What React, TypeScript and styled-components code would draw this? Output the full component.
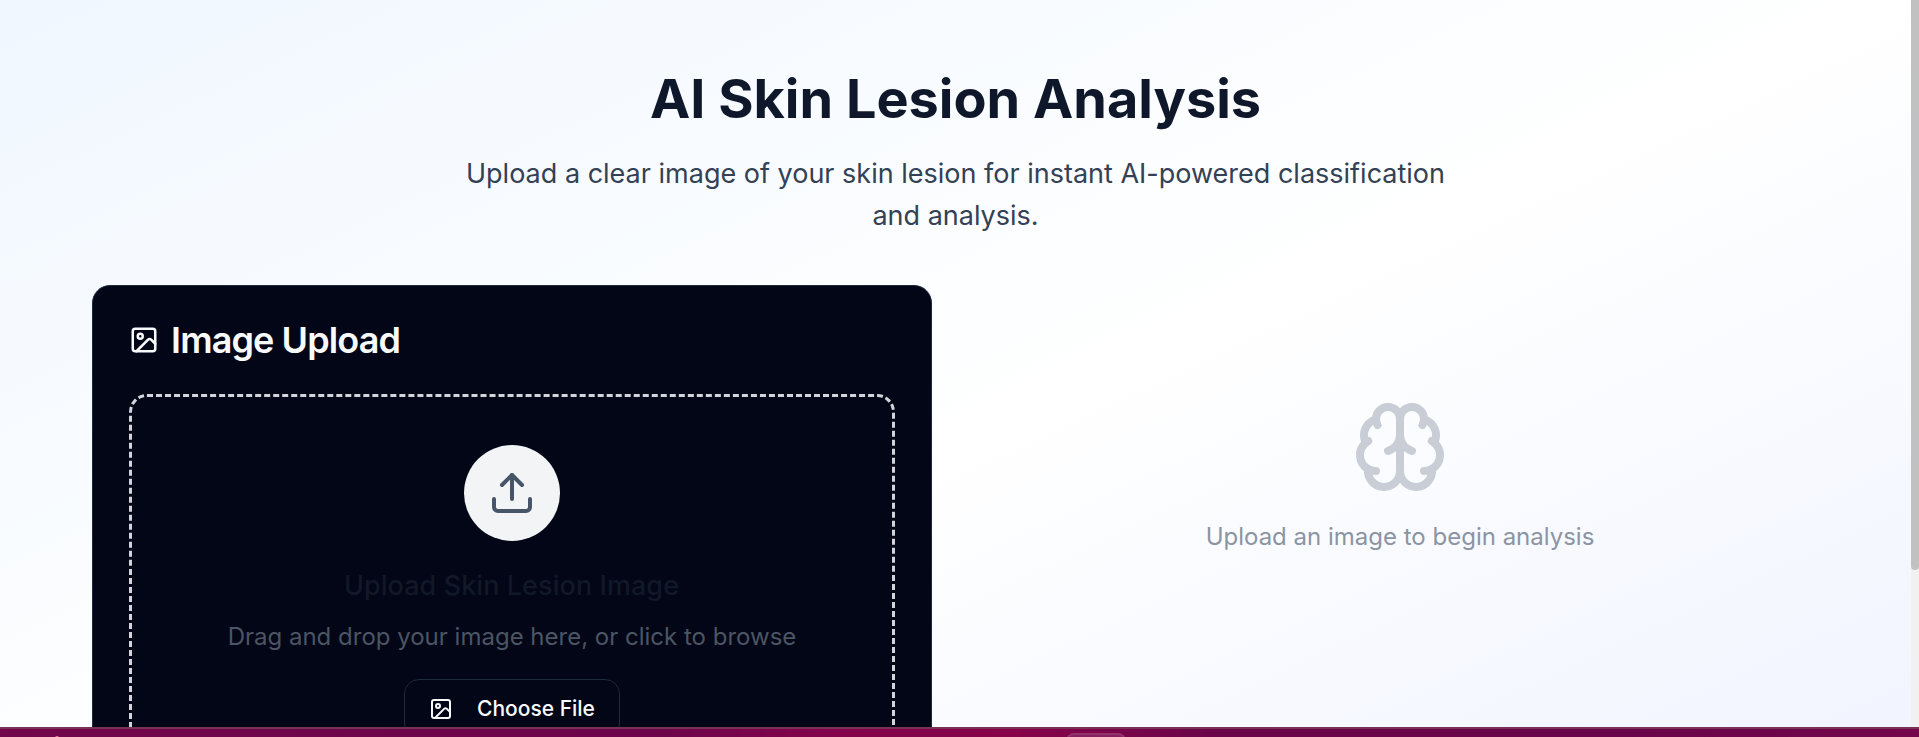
import React from "react";
import styled, { createGlobalStyle } from "styled-components";

const GlobalStyle = createGlobalStyle`
  * { box-sizing: border-box; margin: 0; padding: 0; }
  html, body, #root { height: 100%; overflow: hidden; }
  body { font-family: Inter, "Liberation Sans", sans-serif; color: #0f172a; }
`;

const Shell = styled.div`
  height: 737px;
  display: flex;
  flex-direction: column;
`;
const Viewport = styled.div`
  height: 727px;
  display: flex;
  overflow: hidden;
`;
const Page = styled.main`
  flex: 1;
  height: 1112px;
  padding-top: 72px;
  background: linear-gradient(to bottom right, #f0f7ff 0%, #ffffff 50%, #eef2ff 100%);
  background-size: 100% 900px;
`;
const ScrollTrack = styled.div`
  width: 8px;
  background: #f1f1f1;
`;
const ScrollThumb = styled.div`
  height: 570px;
  background: #c1c1c1;
  border-radius: 0 0 4px 4px;
`;
const Header = styled.header`
  display: flex;
  flex-direction: column;
  align-items: center;
  text-align: center;
`;
const Title = styled.h1`
  font-size: 54px;
  line-height: 54px;
  font-weight: 700;
  color: #0f172a;
`;
const Lead = styled.p`
  width: 1008px;
  margin-top: 27px;
  font-size: 27px;
  line-height: 42px;
  color: #334155;
`;
const Columns = styled.div`
  width: 1728px;
  margin: 48px auto 0;
  display: grid;
  grid-template-columns: 1fr 1fr;
  gap: 48px;
`;
const Card = styled.section`
  height: 700px;
  padding: 36px;
  border: 1px solid #1e293b;
  border-radius: 18px;
  background: #020617;
`;
const CardTitle = styled.h2`
  display: flex;
  align-items: center;
  gap: 12.6px;
  height: 36px;
  font-size: 36px;
  line-height: 36px;
  font-weight: 600;
  letter-spacing: -0.025em;
  color: #f8fafc;
`;
const DropZone = styled.div`
  height: 560px;
  margin-top: 36px;
  padding-top: 48px;
  display: flex;
  flex-direction: column;
  align-items: center;
  border: 3px dashed #d1d5db;
  border-radius: 18px;
`;
const UploadBadge = styled.div`
  width: 96px;
  height: 96px;
  display: flex;
  align-items: center;
  justify-content: center;
  border-radius: 50%;
  background: #f3f4f6;
  color: #475569;
`;
const DropTitle = styled.h3`
  margin-top: 24px;
  font-size: 27px;
  line-height: 42px;
  font-weight: 500;
  letter-spacing: 0.07px;
  color: #111827;
`;
const DropHint = styled.p`
  margin-top: 12px;
  padding-left: 1px;
  font-size: 24px;
  line-height: 36px;
  color: #4b5563;
`;
const FileButton = styled.button`
  width: 216px;
  height: 60px;
  margin-top: 24px;
  display: flex;
  flex-shrink: 0;
  align-items: center;
  padding-left: 24px;
  gap: 24.5px;
  border: 1px solid #1e293b;
  border-radius: 15px;
  background: transparent;
  font: 550 21px/30px Inter, sans-serif;
  color: #f8fafc;
`;
const EmptyState = styled.section`
  display: flex;
  flex-direction: column;
  align-items: center;
  padding-top: 114px;
`;
const EmptyText = styled.p`
  margin-top: 24px;
  padding-left: 1px;
  font-size: 24px;
  line-height: 36px;
  color: #8b94a3;
`;
const BottomBar = styled.footer`
  height: 10px;
  padding: 4px 0 0 1066px;
  border-top: 2px solid #793158;
  background:
    radial-gradient(circle at 57px 9px, #e87898 0 1.5px, transparent 2.5px),
    linear-gradient(90deg, #72064b 0%, #6c054b 34%, #82034b 43%, #87034a 53%, #6b0549 63%, #69054a 85%, #74064b 100%);
  overflow: hidden;
`;
const BarTab = styled.div`
  width: 60px;
  height: 30px;
  border: 2px solid #92316b;
  border-radius: 8px;
  background: #87205e;
`;

const Icon = styled.svg<{ $size: number }>`
  width: ${(p) => p.$size}px;
  height: ${(p) => p.$size}px;
  flex-shrink: 0;
  fill: none;
  stroke: currentColor;
  stroke-width: 2;
  stroke-linecap: round;
  stroke-linejoin: round;
`;

const BrainIcon = styled(Icon)`
  color: #c9ced6;
`;

const ImageIcon = ({ size }: { size: number }) => (
  <Icon $size={size} viewBox="0 0 24 24">
    <rect width="18" height="18" x="3" y="3" rx="2" />
    <circle cx="9" cy="9" r="2" />
    <path d="m21 15-3.086-3.086a2 2 0 0 0-2.828 0L6 21" />
  </Icon>
);

export default function App() {
  return (
    <Shell>
      <GlobalStyle />
      <Viewport>
        <Page>
          <Header>
            <Title>AI Skin Lesion Analysis</Title>
            <Lead>
              Upload a clear image of your skin lesion for instant AI-powered classification and analysis.
            </Lead>
          </Header>
          <Columns>
            <Card>
              <CardTitle>
                <ImageIcon size={30} />
                Image Upload
              </CardTitle>
              <DropZone>
                <UploadBadge>
                  <Icon $size={48} viewBox="0 0 24 24">
                    <path d="M21 15v4a2 2 0 0 1-2 2H5a2 2 0 0 1-2-2v-4" />
                    <path d="m17 8-5-5-5 5" />
                    <path d="M12 3v12" />
                  </Icon>
                </UploadBadge>
                <DropTitle>Upload Skin Lesion Image</DropTitle>
                <DropHint>Drag and drop your image here, or click to browse</DropHint>
                <FileButton type="button">
                  <ImageIcon size={24} />
                  Choose File
                </FileButton>
              </DropZone>
            </Card>
            <EmptyState>
              <BrainIcon $size={96} viewBox="0 0 24 24">
                <path d="M12 5a3 3 0 1 0-5.997.125 4 4 0 0 0-2.526 5.77 4 4 0 0 0 .556 6.588A4 4 0 1 0 12 18Z" />
                <path d="M12 5a3 3 0 1 1 5.997.125 4 4 0 0 1 2.526 5.77 4 4 0 0 1-.556 6.588A4 4 0 1 1 12 18Z" />
                <path d="M15 13a4.5 4.5 0 0 1-3-4 4.5 4.5 0 0 1-3 4" />
                <path d="M17.599 6.5a3 3 0 0 0 .399-1.375" />
                <path d="M6.003 5.125A3 3 0 0 0 6.401 6.5" />
                <path d="M3.477 10.896a4 4 0 0 1 .585-.396" />
                <path d="M19.938 10.5a4 4 0 0 1 .585.396" />
                <path d="M6 18a4 4 0 0 1-1.967-.516" />
                <path d="M19.967 17.484A4 4 0 0 1 18 18" />
              </BrainIcon>
              <EmptyText>Upload an image to begin analysis</EmptyText>
            </EmptyState>
          </Columns>
        </Page>
        <ScrollTrack>
          <ScrollThumb />
        </ScrollTrack>
      </Viewport>
      <BottomBar>
        <BarTab />
      </BottomBar>
    </Shell>
  );
}
